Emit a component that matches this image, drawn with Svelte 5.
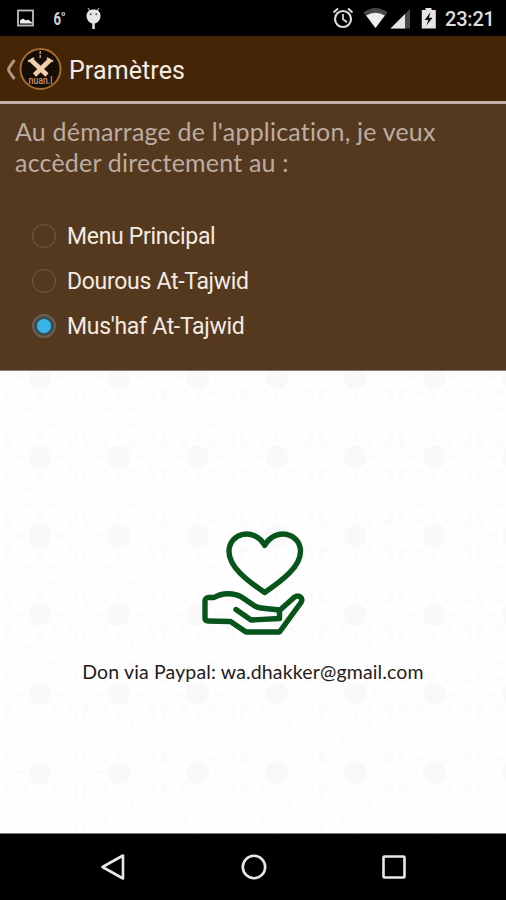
<script lang="ts">
  const options = ['Menu Principal', 'Dourous At-Tajwid', "Mus'haf At-Tajwid"];

  let selected = $state(2);
</script>

<div class="screen">
  <div class="status-bar">
    <svg class="notifications" width="110" height="36" viewBox="0 0 110 36">
      <rect x="18" y="10.5" width="15" height="15" fill="none" stroke="#bdbdbd" stroke-width="1.8" />
      <path d="M20 23.5v-3l3-2 3 2 2-1 4 3v1z" fill="#eee" />
      <path d="M88 8l2 3M99 8l-2 3" stroke="#aaa" stroke-width="1.3" />
      <path d="M93.5 9.5c4.5 0 7 2.7 7 6.2 0 4.2-3 7.8-7 7.8s-7-3.6-7-7.8c0-3.5 2.5-6.2 7-6.2z" fill="#e6e6e6" />
      <path d="M93.500 22v7" stroke="#ddd" stroke-width="2.6" />
      <circle cx="90.700" cy="14.300" r="1" fill="#555" />
      <circle cx="96.300" cy="14.300" r="1" fill="#555" />
      <text x="53.500" y="24.700" font-size="18" textLength="7.500" lengthAdjust="spacingAndGlyphs" font-weight="700" fill="#d5d5d5">6</text>
      <circle cx="63.300" cy="14" r="1.400" fill="none" stroke="#bbb" stroke-width="1.200" />
    </svg>
    <div class="system">
      <svg width="110" height="36" viewBox="330 0 110 36">
        <circle cx="343" cy="19" r="8" fill="none" stroke="#ddd" stroke-width="2.2" />
        <path d="M343 14v5.200l4 3" fill="none" stroke="#ddd" stroke-width="1.700" />
        <path d="M333.500 12.500l4.500-4M352.500 12.500l-4.500-4" stroke="#ddd" stroke-width="2" />
        <path d="M363.500 12.500q12-9 24 0l-12 15.500z" fill="#484848" />
        <path d="M366.200 15.500q9.300-5.500 18.600 0l-9.300 12.500z" fill="#eee" />
        <path d="M390.500 28.500L410 9v19.500z" fill="#484848" />
        <path d="M390.500 28.500L405 14v14.500z" fill="#e5e5e5" />
        <path d="M425.500 8h6v2h4.300v18.500h-14V10h3.700z" fill="#e5e5e5" />
        <path d="M430.500 12l-5.800 8h3.600l-1.800 5.500 6-7.800h-3.600z" fill="#111" />
      </svg>
      <span class="clock">23:21</span>
    </div>
  </div>

  <header>
    <svg width="64" height="64" viewBox="0 0 64 64">
      <path d="M14.500 24q-6 8-6 9.500t6 9.500" fill="none" stroke="#ad9686" stroke-width="3" />
      <circle cx="40.500" cy="33" r="20" fill="#160d04" stroke="#a66b32" stroke-width="2" />
      <path d="M40.200 15v8" stroke="#b4a08d" stroke-width="1.500" stroke-dasharray="3 1" />
      <path d="M31 24l16 15M50 24L34.500 39" stroke="#f1cfac" stroke-width="4.600" />
      <path d="M28 25.500l6-3.500M47 22l6 3.500" stroke="#f1cfac" stroke-width="2" />
      <text x="28.500" y="47.500" font-size="10" font-weight="500" textLength="24" lengthAdjust="spacingAndGlyphs" fill="#c9966b">nuan.l</text>
    </svg>
    <h1>Pramètres</h1>
  </header>

  <section class="settings">
    <p class="question">Au démarrage de l'application, je veux<br />accèder directement au :</p>
    <div class="options" role="radiogroup">
      {#each options as option, i}
        <button role="radio" aria-checked={selected === i} onclick={() => (selected = i)}>
          <span class="radio" class:checked={selected === i}></span>
          <span class="label">{option}</span>
        </button>
      {/each}
    </div>
  </section>

  <main>
    <svg class="pattern" width="100%" height="100%" aria-hidden="true">
      <defs>
        <pattern id="tile" x="0" y="46" width="78.900" height="78.900" patternUnits="userSpaceOnUse">
          <circle cx="40" cy="40" r="11.500" fill="#f9f9f9" />
          <g fill="#fbfbfb">
            {#each [0, 45, 90, 135, 180, 225, 270, 315] as angle}
              <g transform="rotate({angle} 40 40)">
                <path d="M40 14l3 7-3 5-3-5z" />
                <path d="M52 6l5 2-4 4-5-3z" />
              </g>
            {/each}
            <path d="M4 14l4 3-2 13H4zM77 14l-4 3 2 13h2zM4 66l4-3-2-13H4zM77 66l-4-3 2-13h2z" />
          </g>
        </pattern>
      </defs>
      <rect width="100%" height="100%" fill="url(#tile)" />
    </svg>
    <div class="donation">
      <svg width="110" height="112" viewBox="198 525 110 112" fill="none" stroke="#07551b" stroke-width="5.400" stroke-linecap="round" stroke-linejoin="round">
        <path d="M264.700 592.500C246 580 229 566.500 229 551.500C229 533 254 526.500 264.700 545.500C275.400 526.500 300.500 533 300.500 551.500C300.500 566.500 283 580 264.700 592.500Z" />
        <path d="M279.500 610.500L294 597.500C299 594 303.500 598 301 602.500L279.500 632H246L230.500 621.500L208 621C206 621 205 620 205 618V601C205 598.500 206 598 208 597.500H214C222 592.500 234 592.500 241.500 597L254 605.500Q257 607.500 261 608L279.500 610V618.500L251 620L236 609.500" />
      </svg>
      <p>Don via Paypal: wa.dhakker@gmail.com</p>
    </div>
  </main>

  <nav>
    <button aria-label="Retour">
      <svg width="30" height="30" viewBox="0 0 30 30"><path d="M4.500 15L25 3.500v23z" /></svg>
    </button>
    <button aria-label="Accueil">
      <svg width="30" height="30" viewBox="0 0 30 30"><circle cx="15" cy="15" r="11.200" /></svg>
    </button>
    <button aria-label="Applications">
      <svg width="30" height="30" viewBox="0 0 30 30"><rect x="4.500" y="4.500" width="21" height="21" rx="1" /></svg>
    </button>
  </nav>
</div>

<style>
  :global(body) {
    margin: 0;
  }

  .screen {
    display: flex;
    flex-direction: column;
    width: 506px;
    height: 900px;
    overflow: hidden;
    background: #fff;
    font-family: Roboto, sans-serif;
  }

  .status-bar {
    display: flex;
    justify-content: space-between;
    height: 36px;
    background: #000;
    color: #ddd;
  }

  .system {
    display: flex;
    width: 176px;
  }

  .system svg {
    flex: none;
  }

  .clock {
    padding-left: 5px;
    font-size: 20px;
    font-weight: 500;
    line-height: 38px;
    letter-spacing: -0.2px;
  }

  header {
    display: flex;
    height: 65px;
    background: #442506;
    border-bottom: 3px solid #c4aeaa;
  }

  h1 {
    margin: 0 0 0 5px;
    color: #f5ece8;
    font-size: 25px;
    font-weight: 400;
    line-height: 69px;
    letter-spacing: 0.1px;
  }

  .settings {
    box-sizing: border-box;
    height: 267px;
    padding: 12px 15px 0;
    background: #55391e;
    border-bottom: 1px solid #8b7971;
  }

  .question {
    margin: 0;
    color: #bbada4;
    font-family: Lato, sans-serif;
    font-size: 25px;
    line-height: 31px;
    letter-spacing: 0.2px;
    white-space: nowrap;
  }

  .options {
    display: flex;
    flex-direction: column;
    padding: 35px 0 0 17px;
  }

  button {
    display: flex;
    align-items: center;
    padding: 0;
    border: 0;
    background: none;
    color: inherit;
    font: inherit;
  }

  .options button {
    height: 45px;
    gap: 11px;
  }

  .radio {
    box-sizing: border-box;
    width: 24px;
    height: 24px;
    border: 1px solid #795e47;
    border-radius: 50%;
  }

  .radio.checked {
    border: 2px solid #6a6056;
    background: radial-gradient(circle, #35b5e9 0 6.5px, #365057 7.5px, #48483c 10px);
  }

  .label {
    padding-top: 2px;
    color: #f4eae4;
    font-size: 23px;
    line-height: 30px;
    letter-spacing: -0.3px;
  }

  main {
    position: relative;
    flex: 1;
    background: #fefefe;
  }

  .pattern {
    position: absolute;
    inset: 0;
  }

  .donation {
    position: relative;
    display: flex;
    flex-direction: column;
    align-items: center;
    padding-top: 154px;
  }

  .donation p {
    margin: 21px 0 0;
    color: #251c19;
    font-family: Lato, sans-serif;
    font-size: 19.5px;
    line-height: 28px;
    letter-spacing: 0.15px;
    white-space: nowrap;
  }

  nav {
    display: flex;
    justify-content: space-between;
    box-sizing: border-box;
    height: 67px;
    padding: 0 97px 0 98px;
    background: #000;
    border-top: 1px solid #777;
  }

  nav svg {
    fill: none;
    stroke: #e8e8e8;
    stroke-width: 2.6;
    stroke-linejoin: round;
  }
</style>
